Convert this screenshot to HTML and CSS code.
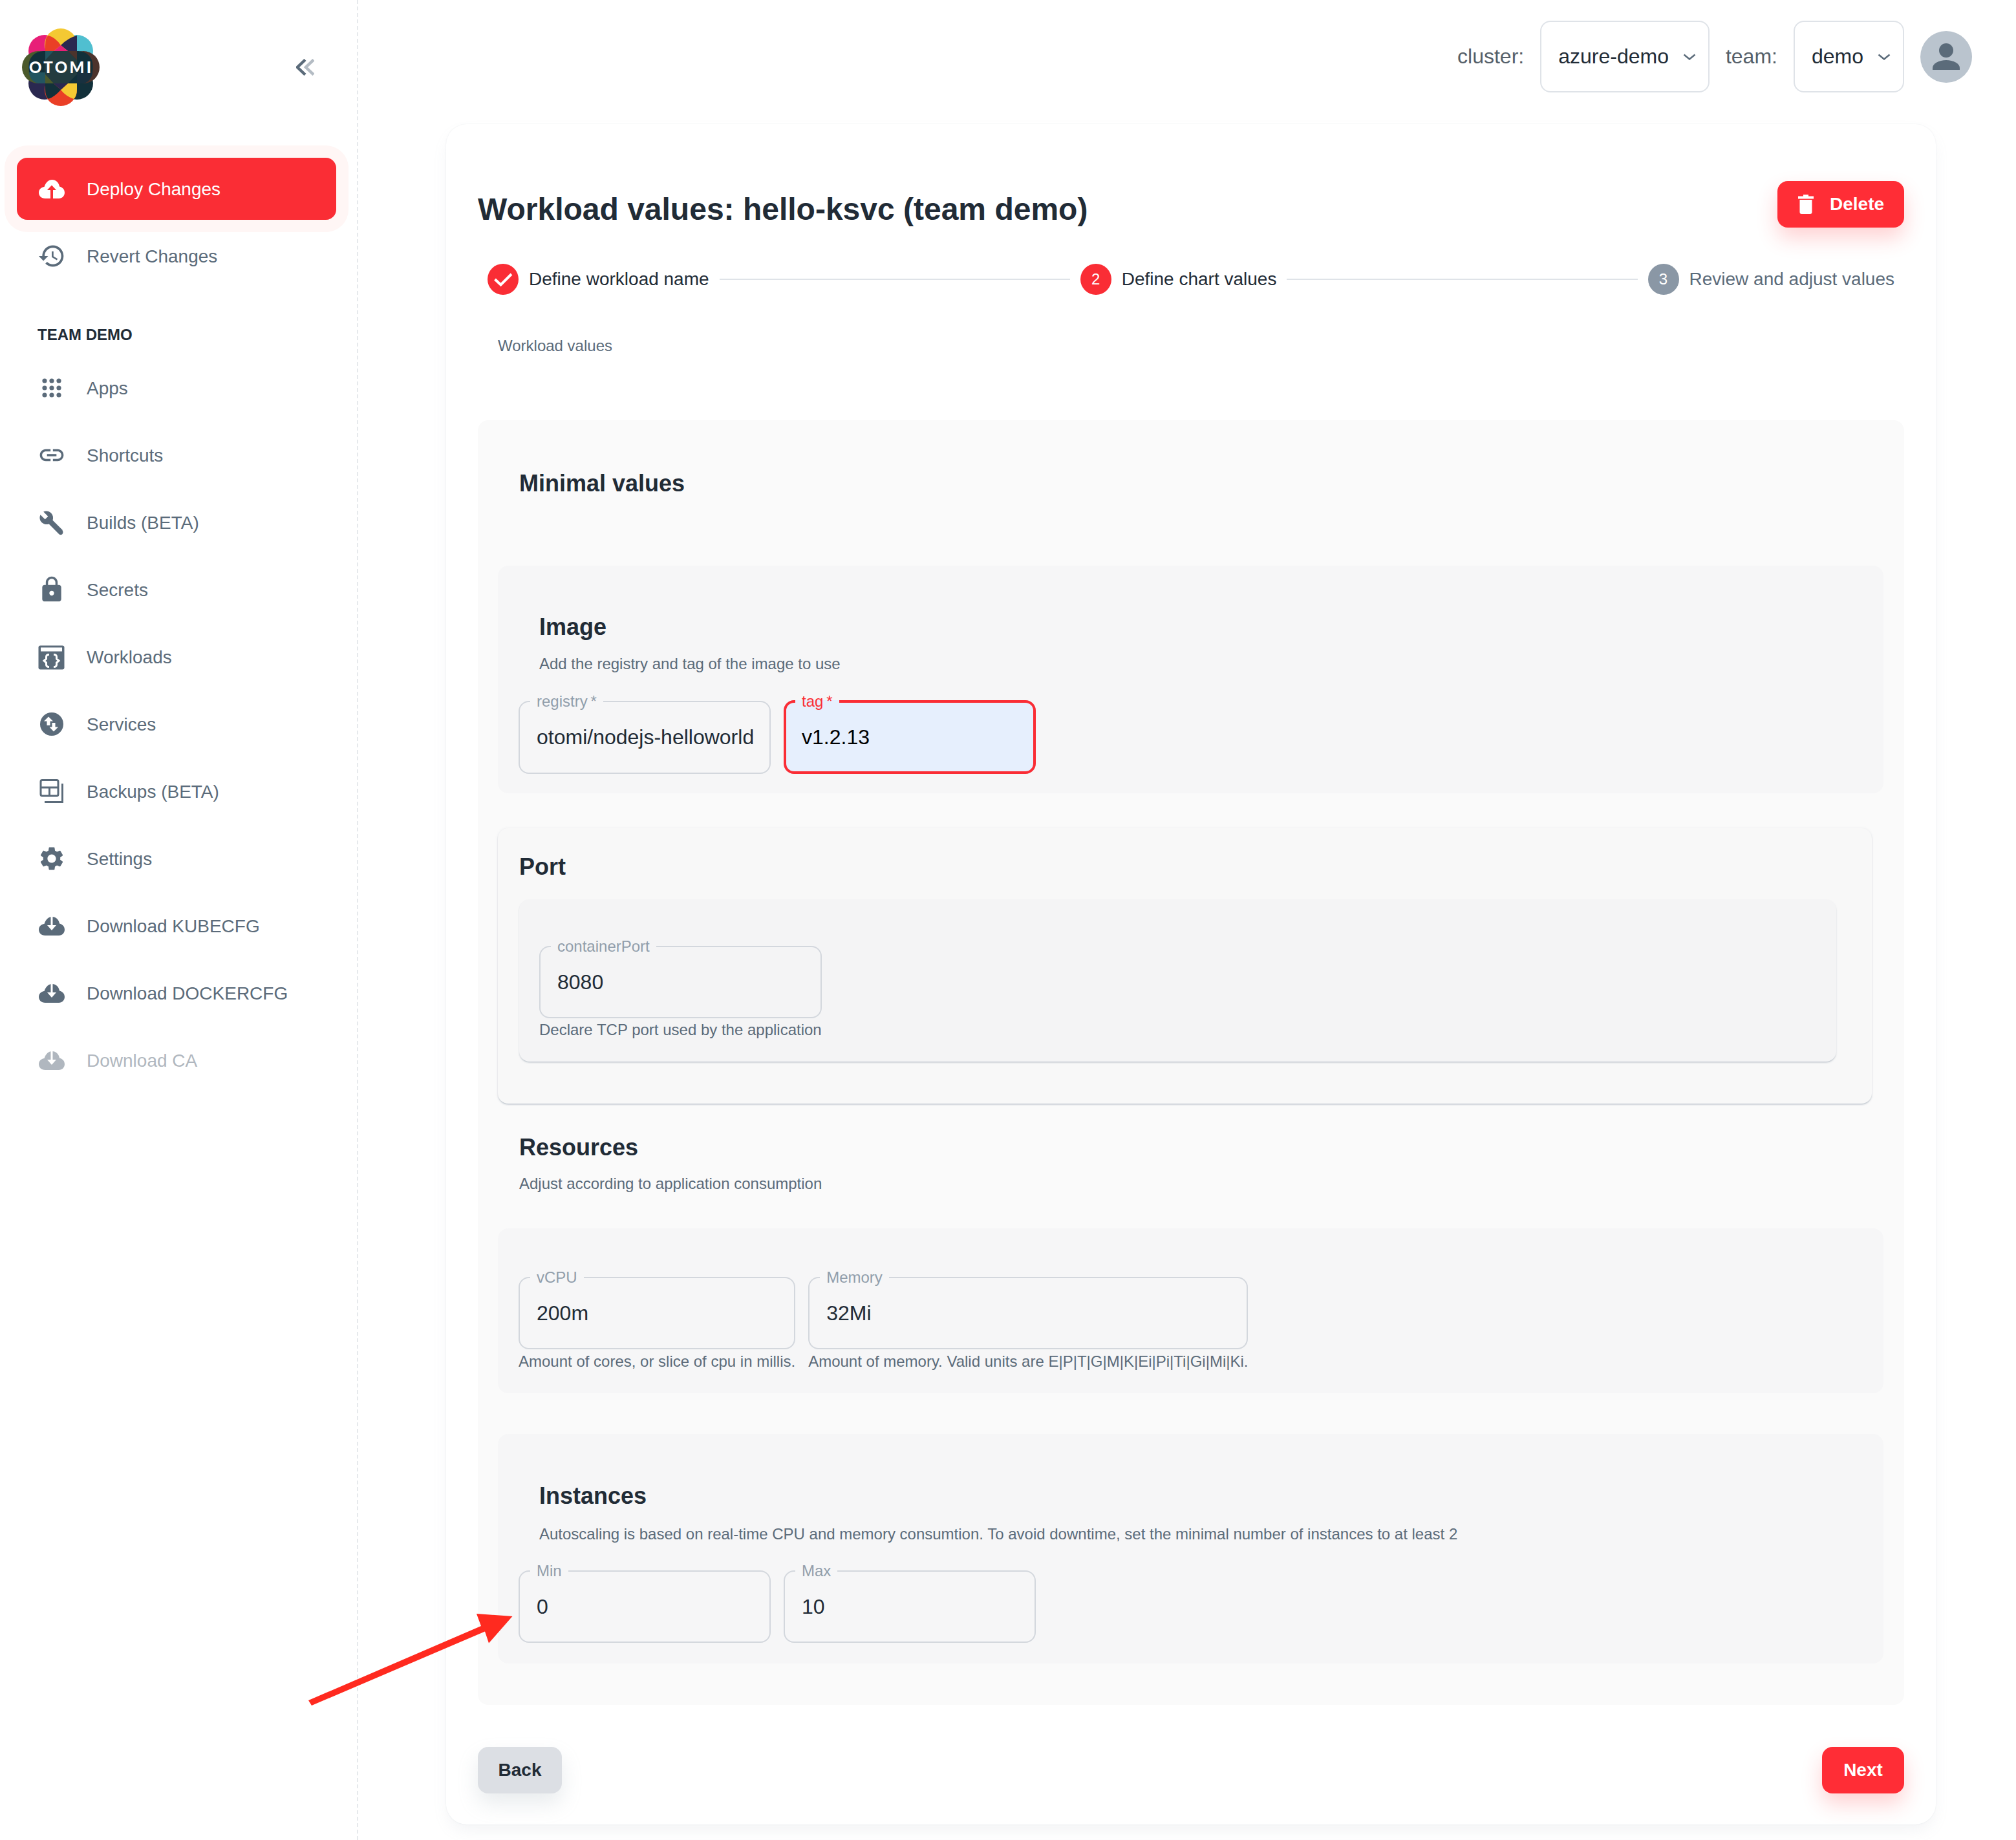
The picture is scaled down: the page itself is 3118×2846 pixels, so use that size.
FILE: index.html
```html
<!DOCTYPE html>
<html lang="en">
  <head>
    <meta charset="UTF-8" />
    <title>Workload values</title>
    <link rel="stylesheet" href="styles.css">
  </head>
  <body>
    <div class="page">
      <aside class="sidebar">
        <div class="brand">
          <svg class="logo" viewBox="0 0 120 120">
            <circle cx="35" cy="35" r="25" fill="#e81f78" />
            <circle cx="85" cy="35" r="25" fill="#50bfd0" />
            <circle cx="35" cy="85" r="25" fill="#2a2850" />
            <circle cx="85" cy="85" r="25" fill="#12303a" />
            <circle cx="60" cy="25" r="25" fill="#f4c933" />
            <circle cx="60" cy="95" r="25" fill="#ea3f26" />
            <circle cx="25" cy="60" r="25" fill="#4b5a2c" />
            <circle cx="95" cy="60" r="25" fill="#4c332c" />
            <path d="M36 35V26Q36 13 41 11Q52 14 60 26L49 35Z" fill="#ea3f26" />
            <path d="M60 26Q72 14 85 11V35H71Z" fill="#2a2850" />
            <path d="M60 26L49 35H71Z" fill="#e81f78" />
            <path d="M36 85H49L60 95Q50 106 41 109Q36 105 36 94Z" fill="#12303a" />
            <path d="M60 95L71 85H85V94Q85 105 80 109Q68 105 60 95Z" fill="#f4c933" />
            <path d="M49 85H71L60 95Z" fill="#2a2850" />
            <rect x="10.5" y="35" width="99" height="50" rx="22" fill="#12303a" />
            <path d="M49 35H71L85 49V71L71 85H49L35 71V49Z" fill="#233c40" />
            <path d="M36 35H49L36 49Z" fill="#235560" />
            <path d="M71 35H85V49Z" fill="#4c332c" />
            <path d="M36 71L49 85H36Z" fill="#4b5a2c" />
            <path d="M10.5 68H36V85H28Q14 85 10.5 68Z" fill="#235560" />
            <path d="M85 68H109.5Q106 85 92 85H85Z" fill="#18303f" />
            <text class="logo-text" x="11" y="69" textLength="96">OTOMI</text>
          </svg>
          <svg class="collapse" viewBox="0 0 28 26">
            <polyline class="chev-back" points="27,1.5 15,13 27,24.5" />
            <polyline class="chev-front" points="14,1.5 2,13 14,24.5" />
          </svg>
        </div>

        <nav>
          <a class="nav-item deploy">
            <span class="nav-icon">
              <svg class="icon-cloud" viewBox="0 0 40 29">
                <path fill="#fff" d="M10 29C4 29 0 25 0 20C0 15 4 11.5 8.5 11C10.5 4.5 15 0 20.5 0C26.5 0 31 4.5 32 10.5C36.5 11.5 40 15 40 20C40 25 36 29 31 29Z" />
                <path fill="#fa2d35" d="M20 8.5L27 16H22V29H18V16H13Z" />
              </svg>
            </span>
            <span class="nav-label">Deploy Changes</span>
          </a>
          <a class="nav-item">
            <span class="nav-icon">
              <svg class="icon-44" viewBox="0 0 24 24"><path d="M13 3c-4.97 0-9 4.03-9 9H1l3.89 3.89.07.14L9 12H6c0-3.87 3.13-7 7-7s7 3.13 7 7-3.13 7-7 7c-1.93 0-3.68-.79-4.94-2.06l-1.42 1.42C8.27 19.99 10.51 21 13 21c4.97 0 9-4.03 9-9s-4.03-9-9-9zm-1 5v5l4.28 2.54.72-1.21-3.5-2.08V8H12z" /></svg>
            </span>
            <span class="nav-label">Revert Changes</span>
          </a>

          <h4 class="nav-title">TEAM DEMO</h4>

          <a class="nav-item">
            <span class="nav-icon">
              <svg class="icon-44" viewBox="0 0 44 44">
                <circle cx="11" cy="11" r="3.6" /><circle cx="22" cy="11" r="3.6" /><circle cx="33" cy="11" r="3.6" />
                <circle cx="11" cy="22" r="3.6" /><circle cx="22" cy="22" r="3.6" /><circle cx="33" cy="22" r="3.6" />
                <circle cx="11" cy="33" r="3.6" /><circle cx="22" cy="33" r="3.6" /><circle cx="33" cy="33" r="3.6" />
              </svg>
            </span>
            <span class="nav-label">Apps</span>
          </a>
          <a class="nav-item">
            <span class="nav-icon">
              <svg class="icon-44" viewBox="0 0 24 24"><path d="M3.9 12c0-1.71 1.39-3.1 3.1-3.1h4V7H7c-2.76 0-5 2.24-5 5s2.24 5 5 5h4v-1.9H7c-1.71 0-3.1-1.39-3.1-3.1zM8 13h8v-2H8v2zm9-6h-4v1.9h4c1.71 0 3.1 1.39 3.1 3.1s-1.39 3.1-3.1 3.1h-4V17h4c2.76 0 5-2.24 5-5s-2.24-5-5-5z" /></svg>
            </span>
            <span class="nav-label">Shortcuts</span>
          </a>
          <a class="nav-item">
            <span class="nav-icon">
              <svg class="icon-40" viewBox="0 0 24 24"><path d="M22.3 19.4l-9.4-9.4c.8-2.3.3-4.9-1.5-6.7C9.5 1.4 6.6 1 4.3 2.1L8.6 6.4 5.8 9.2 1.5 4.9C.4 7.2.8 10.1 2.7 12c1.8 1.8 4.4 2.3 6.7 1.5l9.4 9.4c.9.9 2.2.8 3 0 .9-.9.9-2.6 0-3.5z" /></svg>
            </span>
            <span class="nav-label">Builds (BETA)</span>
          </a>
          <a class="nav-item">
            <span class="nav-icon">
              <svg class="icon-44" viewBox="0 0 24 24"><path d="M18 8h-1V6c0-2.76-2.24-5-5-5S7 3.24 7 6v2H6c-1.1 0-2 .9-2 2v10c0 1.1.9 2 2 2h12c1.1 0 2-.9 2-2V10c0-1.1-.9-2-2-2zm-6 9c-1.1 0-2-.9-2-2s.9-2 2-2 2 .9 2 2-.9 2-2 2zm3.1-9H8.9V6c0-1.71 1.39-3.1 3.1-3.1 1.71 0 3.1 1.39 3.1 3.1v2z" /></svg>
            </span>
            <span class="nav-label">Secrets</span>
          </a>
          <a class="nav-item">
            <span class="nav-icon">
              <svg class="icon-60" viewBox="0 0 60 60">
                <rect x="9.500" y="12.500" width="40" height="37" rx="3" />
                <rect x="13" y="15.500" width="33" height="6" fill="#fff" />
                <path class="icon-line-white" d="M26 26.500Q21.500 26.500 21.500 30V33L18 36L21.500 39V42Q21.500 45.500 26 45.500M33 26.500Q37.500 26.500 37.500 30V33L41 36L37.500 39V42Q37.500 45.500 33 45.500" />
              </svg>
            </span>
            <span class="nav-label">Workloads</span>
          </a>
          <a class="nav-item">
            <span class="nav-icon">
              <svg class="icon-60" viewBox="0 0 60 60">
                <circle cx="30" cy="30" r="18" />
                <path fill="#fff" d="M25 18.500L32 25.500H27.500V32H22.500V25.500H18Z" />
                <path fill="#fff" d="M33 41.500L26.500 34.500H30.500V28H35.500V34.500H40Z" />
              </svg>
            </span>
            <span class="nav-label">Services</span>
          </a>
          <a class="nav-item">
            <span class="nav-icon">
              <svg class="icon-60" viewBox="0 0 60 60">
                <path class="icon-line" d="M15.500 12.500H37.500A2.500 2.500 0 0 1 40 15V34.500A2.500 2.500 0 0 1 37.500 37H15.500A2.500 2.500 0 0 1 13 34.500V15A2.500 2.500 0 0 1 15.500 12.500ZM13 24H40M26.500 24V37M46.500 18V46.500H19" />
              </svg>
            </span>
            <span class="nav-label">Backups (BETA)</span>
          </a>
          <a class="nav-item">
            <span class="nav-icon">
              <svg class="icon-44" viewBox="0 0 24 24"><path d="M19.14 12.94c.04-.3.06-.61.06-.94 0-.32-.02-.64-.07-.94l2.03-1.58c.18-.14.23-.41.12-.61l-1.92-3.32c-.12-.22-.37-.29-.59-.22l-2.39.96c-.5-.38-1.03-.7-1.62-.94L14.400 2.810c-.04-.24-.24-.41-.48-.41h-3.84c-.24 0-.43.17-.47.41L9.250 5.350C8.660 5.590 8.120 5.920 7.630 6.290L5.240 5.330c-.22-.08-.47 0-.59.22L2.740 8.870c-.12.21-.08.47.12.61l2.03 1.58C4.840 11.360 4.800 11.690 4.800 12s.02.64.07.94l-2.03 1.58c-.18.14-.23.41-.12.61l1.92 3.32c.12.22.37.29.59.22l2.39-.96c.5.38 1.03.7 1.62.94l.36 2.54c.05.24.24.41.48.41h3.84c.24 0 .44-.17.47-.41l.36-2.54c.59-.24 1.13-.56 1.62-.94l2.39.96c.22.08.47 0 .59-.22l1.92-3.32c.12-.22.07-.47-.12-.61L19.14 12.94zM12 15.600c-1.98 0-3.6-1.62-3.6-3.6s1.62-3.6 3.6-3.6 3.6 1.62 3.6 3.6-1.62 3.6-3.6 3.6z" /></svg>
            </span>
            <span class="nav-label">Settings</span>
          </a>
          <a class="nav-item">
            <span class="nav-icon">
              <svg class="icon-cloud" viewBox="0 0 40 29">
                <path d="M10 29C4 29 0 25 0 20C0 15 4 11.5 8.500 11C10.500 4.500 15 0 20.500 0C26.500 0 31 4.500 32 10.500C36.500 11.500 40 15 40 20C40 25 36 29 31 29Z" />
                <path fill="#fff" d="M18.500 0H21.500V13H27L20 21L13 13H18.500Z" />
              </svg>
            </span>
            <span class="nav-label">Download KUBECFG</span>
          </a>
          <a class="nav-item">
            <span class="nav-icon">
              <svg class="icon-cloud" viewBox="0 0 40 29">
                <path d="M10 29C4 29 0 25 0 20C0 15 4 11.5 8.500 11C10.500 4.500 15 0 20.500 0C26.500 0 31 4.500 32 10.500C36.500 11.500 40 15 40 20C40 25 36 29 31 29Z" />
                <path fill="#fff" d="M18.500 0H21.500V13H27L20 21L13 13H18.500Z" />
              </svg>
            </span>
            <span class="nav-label">Download DOCKERCFG</span>
          </a>
          <a class="nav-item is-disabled">
            <span class="nav-icon">
              <svg class="icon-cloud" viewBox="0 0 40 29">
                <path d="M10 29C4 29 0 25 0 20C0 15 4 11.5 8.500 11C10.500 4.500 15 0 20.500 0C26.500 0 31 4.500 32 10.500C36.500 11.500 40 15 40 20C40 25 36 29 31 29Z" />
                <path fill="#fff" d="M18.500 0H21.500V13H27L20 21L13 13H18.500Z" />
              </svg>
            </span>
            <span class="nav-label">Download CA</span>
          </a>
        </nav>
      </aside>

      <main class="content">
        <header class="topbar">
          <span class="topbar-label">cluster:</span>
          <div class="select">
            azure-demo
            <svg class="select-chevron" viewBox="0 0 20 10"><polyline points="1.500,1.500 10,8.500 18.500,1.500" /></svg>
          </div>
          <span class="topbar-label">team:</span>
          <div class="select">
            demo
            <svg class="select-chevron" viewBox="0 0 20 10"><polyline points="1.500,1.500 10,8.500 18.500,1.500" /></svg>
          </div>
          <div class="avatar">
            <svg viewBox="0 0 80 80">
              <circle cx="40" cy="30" r="11" />
              <path d="M19 60V57C19 50 29 45 40 45C51 45 61 50 61 57V60Z" />
            </svg>
          </div>
        </header>

        <section class="card">
          <div class="card-head">
            <h1>Workload values: hello-ksvc (team demo)</h1>
            <button class="btn btn-delete">
              <svg class="icon-trash" viewBox="0 0 24 30"><path d="M8 0H16V2.500H24V6.500H0V2.500H8ZM2.500 8H21.500V27A3 3 0 0 1 18.500 30H5.500A3 3 0 0 1 2.500 27Z" /></svg>
              Delete
            </button>
          </div>

          <div class="stepper">
            <div class="step">
              <span class="step-circle">
                <svg viewBox="0 0 48 48"><polyline points="11.500,24 20.500,32.500 37,16" /></svg>
              </span>
              Define workload name
            </div>
            <div class="step-line"></div>
            <div class="step">
              <span class="step-circle">2</span>
              Define chart values
            </div>
            <div class="step-line"></div>
            <div class="step step-todo">
              <span class="step-circle">3</span>
              Review and adjust values
            </div>
          </div>

          <div class="form-caption">Workload values</div>

          <div class="values">
            <h2 class="heading heading-minimal">Minimal values</h2>

            <div class="panel panel-image">
              <h3 class="heading heading-in">Image</h3>
              <p class="desc desc-in">Add the registry and tag of the image to use</p>
              <div class="fields">
                <fieldset class="field field-half">
                  <legend>registry&thinsp;*</legend>
                  <div class="field-value">otomi/nodejs-helloworld</div>
                </fieldset>
                <fieldset class="field field-half field-focus">
                  <legend>tag&thinsp;*</legend>
                  <div class="field-value">v1.2.13</div>
                </fieldset>
              </div>
            </div>

            <div class="panel-port">
              <h3 class="heading">Port</h3>
              <div class="panel-inner">
                <div class="field-wrap">
                  <fieldset class="field">
                    <legend>containerPort</legend>
                    <div class="field-value">8080</div>
                  </fieldset>
                  <div class="helper">Declare TCP port used by the application</div>
                </div>
              </div>
            </div>

            <h3 class="heading heading-resources">Resources</h3>
            <p class="desc desc-resources">Adjust according to application consumption</p>

            <div class="panel panel-resources">
              <div class="fields">
                <div class="field-wrap">
                  <fieldset class="field">
                    <legend>vCPU</legend>
                    <div class="field-value">200m</div>
                  </fieldset>
                  <div class="helper">Amount of cores, or slice of cpu in millis.</div>
                </div>
                <div class="field-wrap">
                  <fieldset class="field">
                    <legend>Memory</legend>
                    <div class="field-value">32Mi</div>
                  </fieldset>
                  <div class="helper">Amount of memory. Valid units are E|P|T|G|M|K|Ei|Pi|Ti|Gi|Mi|Ki.</div>
                </div>
              </div>
            </div>

            <div class="panel panel-instances">
              <h3 class="heading heading-in">Instances</h3>
              <p class="desc desc-in">Autoscaling is based on real-time CPU and memory consumtion. To avoid downtime, set the minimal number of instances to at least 2</p>
              <div class="fields">
                <fieldset class="field field-half">
                  <legend>Min</legend>
                  <div class="field-value">0</div>
                </fieldset>
                <fieldset class="field field-half">
                  <legend>Max</legend>
                  <div class="field-value">10</div>
                </fieldset>
              </div>
            </div>
          </div>

          <div class="card-foot">
            <button class="btn btn-back">Back</button>
            <button class="btn btn-next">Next</button>
          </div>
        </section>
      </main>
    </div>

    <!-- annotation drawn on top of the screenshot -->
    <svg class="arrow" viewBox="0 0 330 160">
      <polygon points="7,140 274,25 267,6 322.500,10 286,51.600 280,33.500 12,148" />
    </svg>
  </body>
</html>
```

FILE: styles.css
```css
* {
  box-sizing: border-box;
}

body {
  margin: 0;
  position: relative;
  background-color: #fff;
  color: #212b36;
  font-family: "Liberation Sans", Arial, sans-serif;
  font-size: 28px;
}

.page {
  display: flex;
  min-height: 2846px;
}

/* sidebar */
.sidebar {
  width: 554px;
  flex-shrink: 0;
  border-right: 2px dashed #e6e9ec;
  padding: 44px 0 0 26px;
}

.brand {
  display: flex;
  align-items: center;
  justify-content: space-between;
  width: 460px;
  padding-left: 8px;
  margin-bottom: 80px;
}

.logo {
  width: 120px;
  height: 120px;
}

.logo-text {
  fill: #fff;
  font-family: Lato, "Liberation Sans", sans-serif;
  font-weight: 900;
  font-size: 24px;
}

.collapse {
  width: 28px;
  height: 26px;
  fill: none;
  stroke-width: 4.5;
}

.chev-front {
  stroke: #5b6b7a;
}

.chev-back {
  stroke: #b4bcc4;
}

.nav-item {
  display: flex;
  align-items: center;
  gap: 30px;
  width: 494px;
  height: 96px;
  margin-bottom: 8px;
  padding-left: 30px;
  color: #5b6b7a;
}

.nav-label {
  padding-top: 2px;
}

.nav-item.deploy {
  color: #fff;
  background-color: #fa2d35;
  border-radius: 16px;
  box-shadow: 0 0 0 19px #fff6f5;
}

.nav-item.is-disabled {
  opacity: 0.48;
}

.nav-icon {
  display: flex;
  align-items: center;
  justify-content: center;
  width: 48px;
  height: 48px;
  fill: #5b6b7a;
}

.icon-44 {
  width: 44px;
  height: 44px;
  flex-shrink: 0;
}

.icon-40,
.icon-cloud {
  width: 40px;
  flex-shrink: 0;
}

.icon-40 {
  height: 40px;
}

.icon-cloud {
  height: 29px;
}

.icon-60 {
  width: 60px;
  height: 60px;
  flex-shrink: 0;
}

.icon-line {
  fill: none;
  stroke: #5b6b7a;
  stroke-width: 3;
}

.icon-line-white {
  fill: none;
  stroke: #fff;
  stroke-width: 3;
}

.nav-title {
  margin: 58px 0 18px 32px;
  font-size: 24px;
  line-height: 32px;
  font-weight: bold;
}

/* top bar */
.content {
  flex: 1;
  min-width: 0;
  padding: 32px 124px 0 136px;
}

.topbar {
  display: flex;
  align-items: center;
  justify-content: flex-end;
  gap: 25px;
  height: 111px;
  margin-right: -56px;
  margin-bottom: 49px;
  font-size: 32px;
}

.topbar-label {
  color: #555f69;
}

.select {
  display: flex;
  align-items: center;
  gap: 22px;
  height: 111px;
  padding: 0 19px 0 26px;
  border: 2px solid #dfe3e8;
  border-radius: 16px;
}

.select-chevron {
  width: 20px;
  height: 10px;
  fill: none;
  stroke: #5b6b7a;
  stroke-width: 2.5;
}

.avatar {
  width: 80px;
  height: 80px;
  border-radius: 50%;
  background-color: #bac4ce;
  fill: #5b6b7a;
}

.avatar svg {
  display: block;
}

/* card */
.card {
  padding: 88px 49px 48px 49px;
  border-radius: 32px;
  background-color: #fff;
  box-shadow: 0 0 2px rgba(145, 158, 171, 0.2), 0 12px 24px -4px rgba(145, 158, 171, 0.12);
}

.card-head {
  display: flex;
  justify-content: space-between;
  align-items: flex-start;
}

h1 {
  margin: 8px 0 0;
  font-size: 48px;
  line-height: 72px;
  font-weight: bold;
}

.btn {
  border: 0;
  border-radius: 16px;
  font-family: inherit;
  font-size: 28px;
  font-weight: bold;
}

.btn-delete {
  display: flex;
  align-items: center;
  gap: 25px;
  width: 196px;
  height: 72px;
  padding-left: 32px;
  color: #fff;
  background-color: #ff2d36;
  box-shadow: 0 16px 32px rgba(255, 48, 54, 0.22);
}

.icon-trash {
  width: 24px;
  height: 30px;
  fill: #fff;
}

.stepper {
  display: flex;
  align-items: center;
  gap: 16px;
  margin-top: 48px;
  padding: 0 15px;
}

.step {
  display: flex;
  align-items: center;
  gap: 16px;
}

.step-line {
  flex: 1;
  height: 2px;
  background-color: #dfe3e8;
}

.step-circle {
  display: flex;
  align-items: center;
  justify-content: center;
  width: 48px;
  height: 48px;
  border-radius: 50%;
  background-color: #fa2d35;
  color: #fff;
  font-size: 24px;
}

.step-circle svg {
  fill: none;
  stroke: #fff;
  stroke-width: 4;
}

.step-todo {
  color: #5b6b7a;
}

.step-todo .step-circle {
  background-color: #8a97a5;
}

.form-caption {
  margin: 63px 0 99px 31px;
  font-size: 24px;
  line-height: 32px;
  color: #5b6b7a;
}

/* form panels */
.values {
  padding: 76px 32px 64px 31px;
  border-radius: 16px;
  background-color: #fafafa;
}

.heading {
  margin: 0;
  font-size: 36px;
  line-height: 44px;
  font-weight: bold;
}

.heading-minimal {
  margin-left: 33px;
  margin-bottom: 105px;
}

.heading-in {
  margin-left: 32px;
}

.desc {
  margin: 0;
  font-size: 24px;
  line-height: 32px;
  color: #5b6b7a;
}

.desc-in {
  margin-left: 32px;
}

.panel {
  padding-left: 32px;
  border-radius: 16px;
  background-color: #f6f6f7;
}

.panel-image {
  padding-top: 73px;
  padding-bottom: 30px;
}

.panel-image .desc {
  margin-top: 19px;
}

.panel-image .fields {
  margin-top: 28px;
}

.fields {
  display: flex;
  gap: 20px;
}

.field {
  min-width: 0;
  margin: 0;
  padding: 19px 26px 32px;
  border: 2px solid #d3d7dd;
  border-radius: 16px;
}

.field legend {
  margin-left: -10px;
  padding: 0 10px;
  font-size: 24px;
  line-height: 28px;
  color: #919eab;
}

.field-half {
  width: 390px;
}

.field-focus {
  padding: 19px 24px 31px;
  border: 4px solid #fa2d35;
  background-color: #e6effd;
}

.field-focus legend {
  color: #fa2d35;
}

.field-focus .field-value {
  color: #000;
}

.field-value {
  font-size: 32px;
  line-height: 44px;
  white-space: nowrap;
}

.field-wrap {
  display: flex;
  flex-direction: column;
}

.helper {
  margin-top: 3px;
  font-size: 24px;
  line-height: 32px;
  color: #5b6b7a;
  white-space: nowrap;
}

.panel-port {
  width: 2125px;
  margin-top: 54px;
  padding: 38px 55px 65px 33px;
  border-radius: 16px;
  background-color: #f8f8f8;
  box-shadow: 0 2px 3px -1px rgba(145, 158, 171, 0.8), 0 0 4px rgba(145, 158, 171, 0.12);
}

.panel-inner {
  display: flex;
  margin-top: 28px;
  padding: 59px 31px 33px;
  border-radius: 16px;
  background-color: #f4f4f5;
  box-shadow: 0 2px 3px -1px rgba(145, 158, 171, 0.8);
}

.panel-inner .helper {
  margin-top: 2px;
}

.heading-resources {
  margin: 46px 0 18px 33px;
}

.desc-resources {
  margin-left: 33px;
}

.panel-resources {
  margin-top: 53px;
  padding-top: 62px;
  padding-bottom: 33px;
}

.panel-instances {
  margin-top: 63px;
  padding-top: 74px;
  padding-bottom: 32px;
}

.panel-instances .desc {
  margin-top: 21px;
}

.panel-instances .fields {
  margin-top: 27px;
}

.card-foot {
  display: flex;
  justify-content: space-between;
  margin-top: 65px;
}

.btn-back,
.btn-next {
  height: 72px;
}

.btn-back {
  width: 130px;
  background-color: #dcdfe4;
  color: #212b36;
  box-shadow: 0 16px 32px rgba(145, 158, 171, 0.2);
}

.btn-next {
  width: 127px;
  background-color: #ff2d36;
  color: #fff;
  box-shadow: 0 16px 32px rgba(255, 48, 54, 0.22);
}

/* arrow over the page */
.arrow {
  position: absolute;
  left: 470px;
  top: 2490px;
  width: 330px;
  height: 160px;
  fill: #ff2a1f;
}
```
